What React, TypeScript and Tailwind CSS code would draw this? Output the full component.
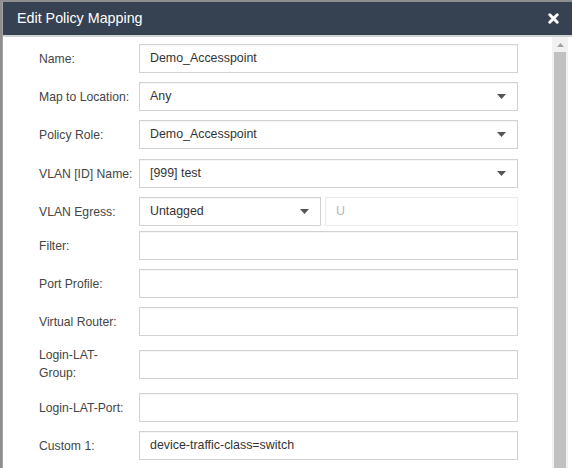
import React from 'react';

type Row = {
  label: string;
  value?: string;
  kind: 'text' | 'select' | 'egress';
  mt: string;
  tall?: boolean;
};

const rows: Row[] = [
  { label: 'Name:', value: 'Demo_Accesspoint', kind: 'text', mt: 'mt-0' },
  { label: 'Map to Location:', value: 'Any', kind: 'select', mt: 'mt-[9px]' },
  { label: 'Policy Role:', value: 'Demo_Accesspoint', kind: 'select', mt: 'mt-[9px]' },
  { label: 'VLAN [ID] Name:', value: '[999] test', kind: 'select', mt: 'mt-[10px]' },
  { label: 'VLAN Egress:', value: 'Untagged', kind: 'egress', mt: 'mt-[9px]' },
  { label: 'Filter:', kind: 'text', mt: 'mt-[5px]' },
  { label: 'Port Profile:', kind: 'text', mt: 'mt-[9px]' },
  { label: 'Virtual Router:', kind: 'text', mt: 'mt-[9px]' },
  { label: 'Login-LAT-Group:', kind: 'text', mt: 'mt-[9px]', tall: true },
  { label: 'Login-LAT-Port:', kind: 'text', mt: 'mt-[10px]' },
  { label: 'Custom 1:', value: 'device-traffic-class=switch', kind: 'text', mt: 'mt-[9px]' },
];

const Caret = () => (
  <svg width="9" height="5" viewBox="0 0 9 5" className="shrink-0">
    <path d="M0 0 H9 L4.5 5 Z" fill="#555" />
  </svg>
);

const Field = ({ value, select, className }: { value?: string; select?: boolean; className: string }) => (
  <div
    className={`${className} h-[29px] flex items-center border border-[#d2d2d2] bg-white pl-[10px] pr-[11px] shadow-[inset_0_1px_1px_rgba(0,0,0,0.04)]`}
  >
    <span className="flex-1 text-[12.4px] text-[#333] truncate">{value}</span>
    {select && <Caret />}
  </div>
);

export default function App() {
  return (
    <div
      className="w-[572px] h-[468px] overflow-hidden bg-[#8e8e8e] pt-[2px] pl-[2px] flex flex-col"
      style={{ fontFamily: '"Liberation Sans", Arial, sans-serif' }}
    >
      <div className="flex-1 flex flex-col bg-white border-l border-[#a4a4a4] min-h-0">
        {/* Header */}
        <div className="h-[33px] shrink-0 bg-[#364252] flex items-center justify-between pl-[14px] pr-[13px] border-b-2 border-[#d0d3d6] box-content">
          <span className="text-white text-[14.3px]">Edit Policy Mapping</span>
          <svg width="11" height="11" viewBox="0 0 11 11">
            <path d="M1.8 1.8 L9.2 9.2 M9.2 1.8 L1.8 9.2" stroke="#fff" strokeWidth="3" strokeLinecap="round" />
          </svg>
        </div>

        {/* Body */}
        <div className="flex-1 flex min-h-0">
          <div className="flex-1 pl-[36px] pr-[34px] pt-[7px]">
            {rows.map(r => (
              <div key={r.label} className={`${r.mt} flex items-center ${r.tall ? 'h-[38px]' : 'h-[29px]'}`}>
                <div className="w-[100px] shrink-0 pr-[5px] text-[12.2px] leading-[18px] text-[#454545]">
                  {r.label}
                </div>
                {r.kind === 'egress' ? (
                  <div className="flex-1 flex gap-[4px]">
                    <Field value={r.value} select className="w-[182px]" />
                    <div className="flex-1 h-[29px] flex items-center border border-[#ebebeb] bg-white pl-[10px] text-[12.4px] text-[#b5b5b5]">
                      U
                    </div>
                  </div>
                ) : (
                  <Field value={r.value} select={r.kind === 'select'} className="flex-1" />
                )}
              </div>
            ))}
          </div>

          {/* Scrollbar */}
          <div className="w-[16px] shrink-0 bg-[#f1f1f1] flex flex-col items-center pt-[6px]">
            <svg width="7" height="4" viewBox="0 0 7 4">
              <path d="M0 4 L3.5 0 L7 4 Z" fill="#a3a3a3" />
            </svg>
            <div className="mt-[5px] w-[12px] flex-1 bg-[#c1c1c1]" />
          </div>
          <div className="w-[4px] shrink-0 bg-white" />
        </div>
      </div>
    </div>
  );
}
